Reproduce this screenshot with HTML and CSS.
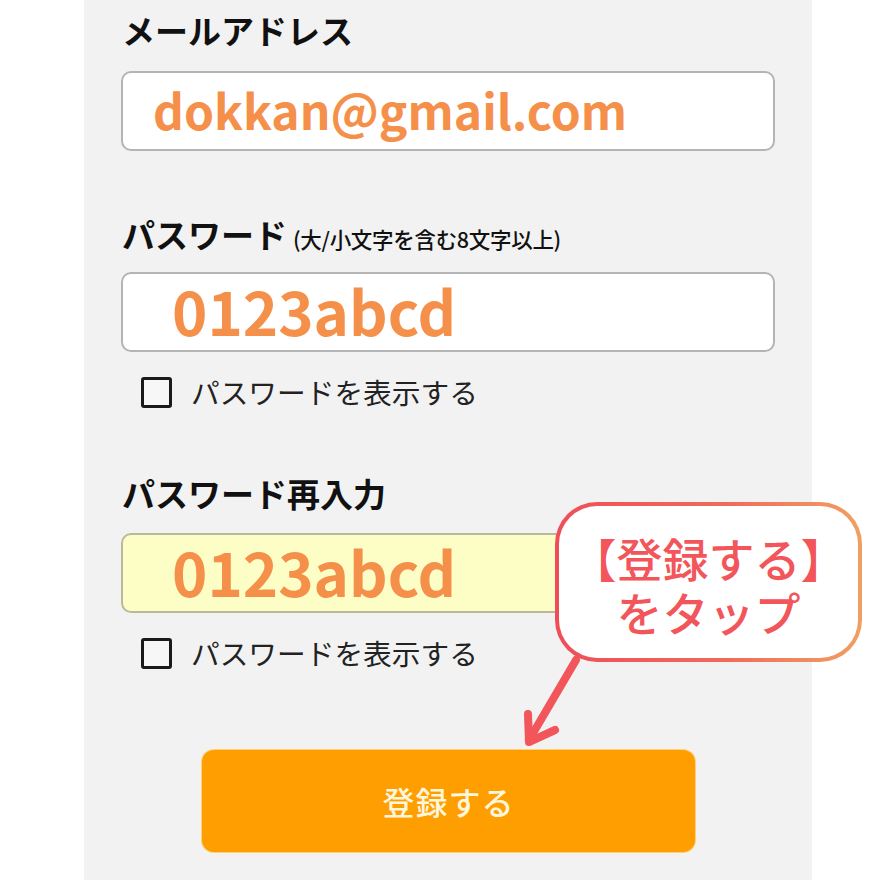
FILE: index.html
```html
<!DOCTYPE html>
<html lang="ja">
<head>
<meta charset="utf-8">
<title>登録</title>
<link rel="stylesheet" href="styles.css">
</head>
<body>
<div class="page">
  <div class="panel">
    <div class="label label-first">メールアドレス</div>
    <div class="field"><span class="val val-email">dokkan@gmail.com</span></div>

    <div class="label label-pw">パスワード<span class="note">(大/小文字を含む8文字以上)</span></div>
    <div class="field"><span class="val val-pw">0123abcd</span></div>
    <div class="check"><span class="box"></span><span class="check-text">パスワードを表示する</span></div>

    <div class="label label-re">パスワード再入力</div>
    <div class="field field-yellow"><span class="val val-pw">0123abcd</span></div>
    <div class="check check-2"><span class="box"></span><span class="check-text">パスワードを表示する</span></div>

    <div class="btn-row"><div class="btn">登録する</div></div>
  </div>

  <div class="bubble">
    <div class="bubble-inner">
      <div class="bubble-line">【登録する】</div>
      <div class="bubble-line">をタップ</div>
    </div>
  </div>
  <svg class="arrow" width="80" height="110" viewBox="0 0 80 110">
    <g fill="none" stroke="#f2555a" stroke-width="8" stroke-linecap="round" stroke-linejoin="round">
      <path d="M58 8 L11 88"/>
      <path d="M10 62 L11 90 L37 78"/>
    </g>
  </svg>
</div>
</body>
</html>
```

FILE: styles.css
```css
html, body {
  margin: 0;
  padding: 0;
  background: #ffffff;
}
body {
  font-family: "Noto Sans CJK JP", "Noto Sans", sans-serif;
  width: 880px;
  height: 880px;
  overflow: hidden;
}
.page {
  position: relative;
  width: 880px;
  height: 880px;
}
.panel {
  margin-left: 84px;
  width: 728px;
  height: 880px;
  background: #f2f2f2;
  box-sizing: border-box;
  padding: 0 0 0 37px;
  display: flex;
  flex-direction: column;
  align-items: flex-start;
}
.label {
  font-size: 33px;
  font-weight: 700;
  color: #111;
  line-height: 40px;
  height: 40px;
  padding-left: 1px;
  display: flex;
  align-items: baseline;
}
.label-first { margin-top: 10px; }
.label-pw { margin-top: 63px; }
.label-re { margin-top: 65px; }
.note {
  font-size: 21.5px;
  font-weight: 500;
  margin-left: 6px;
  letter-spacing: -0.3px;
}
.field {
  box-sizing: border-box;
  width: 654px;
  height: 80px;
  margin-top: 21px;
  border: 2px solid #b4b4b4;
  border-radius: 10px;
  background: #ffffff;
  display: flex;
  align-items: center;
}
.field-yellow {
  background: #fdfdc6;
  border-color: #b9b99c;
}
.label-pw + .field { margin-top: 18px; }
.label-re + .field { margin-top: 20px; }
.val {
  color: #f5904a;
  font-weight: 700;
  line-height: 1;
}
.val-email {
  font-size: 48px;
  padding-left: 30px;
  margin-top: -4px;
}
.val-pw {
  font-size: 60px;
  padding-left: 49px;
  margin-top: -4px;
}
.check {
  display: flex;
  align-items: center;
  margin-top: 24px;
  margin-left: 20px;
  height: 32px;
}
.check-2 { margin-top: 24px; }
.box {
  box-sizing: border-box;
  width: 31px;
  height: 31px;
  border: 3.5px solid #1a1a1a;
  border-radius: 3px;
  background: #f7f7f7;
}
.check-text {
  font-size: 28.7px;
  font-weight: 400;
  color: #222;
  margin-left: 19px;
  line-height: 32px;
}
.btn-row {
  margin-top: 81px;
  margin-left: 81px;
}
.btn {
  width: 493px;
  height: 102px;
  border-radius: 12px;
  background: #ff9e00;
  box-shadow: 0 0 0 1px #ffd27a;
  color: #fff6dc;
  font-size: 32px;
  font-weight: 500;
  display: flex;
  align-items: center;
  justify-content: center;
  letter-spacing: 1px;
}
.bubble {
  position: absolute;
  left: 555px;
  top: 502px;
  width: 307px;
  height: 160px;
  box-sizing: border-box;
  padding: 4px;
  border-radius: 42px;
  background: linear-gradient(90deg, #ef4e58 0%, #f06a5a 55%, #f0a064 100%);
}
.bubble-inner {
  width: 100%;
  height: 100%;
  box-sizing: border-box;
  border-radius: 38px;
  background: #ffffff;
  color: #f2555a;
  font-size: 46px;
  font-weight: 500;
  text-align: center;
  padding-top: 24px;
  display: flex;
  flex-direction: column;
  align-items: center;
}
.bubble-line {
  line-height: 54px;
  height: 54px;
}
.arrow {
  position: absolute;
  left: 518px;
  top: 652px;
}
```
